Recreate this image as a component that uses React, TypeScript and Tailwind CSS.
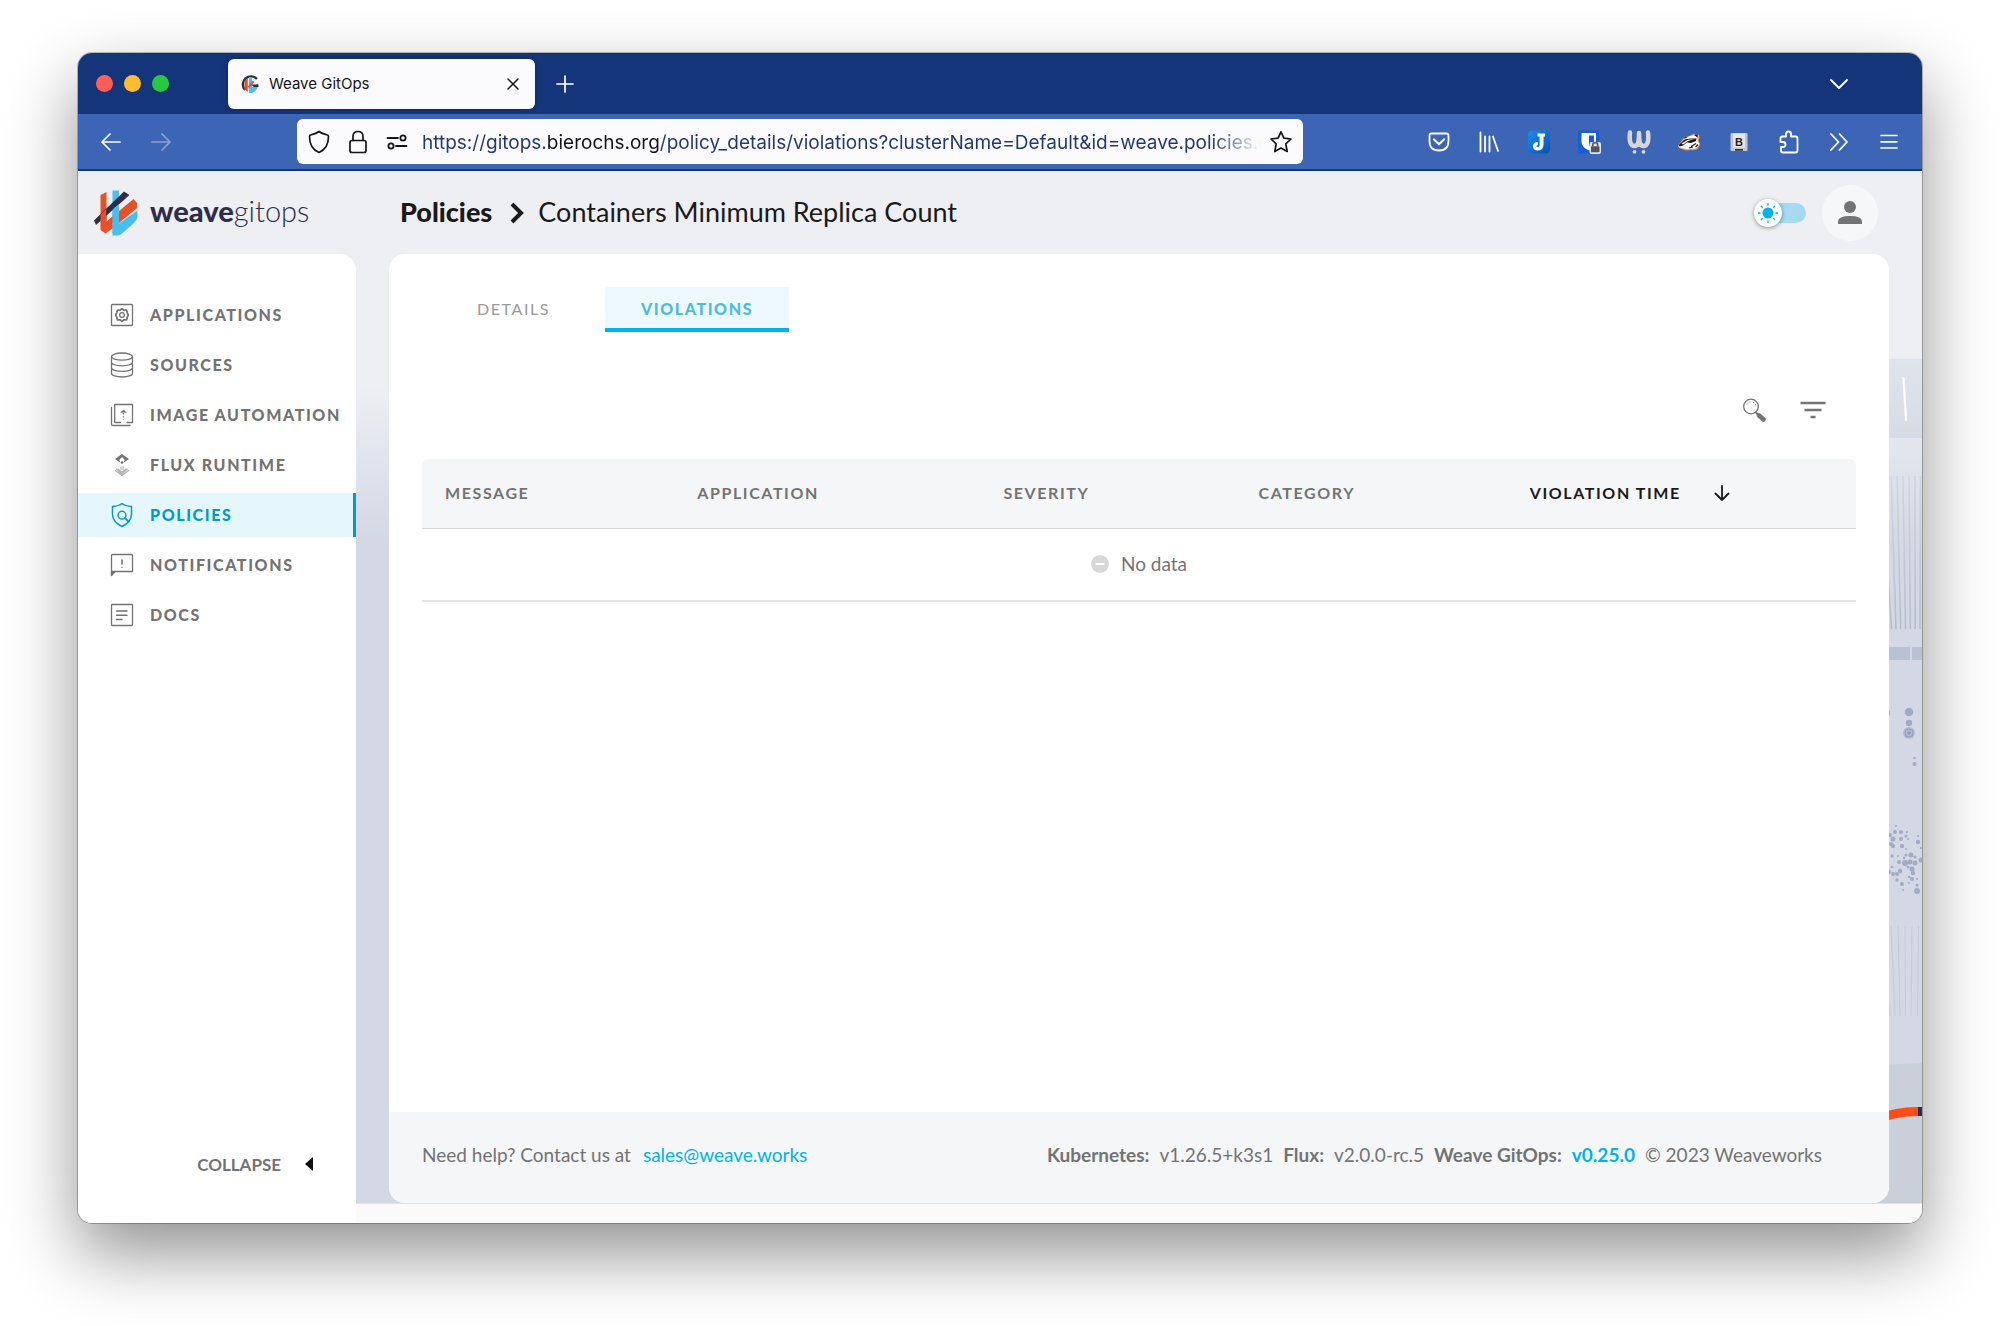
import type { ReactNode } from "react";

const stroke = {
  fill: "none",
  stroke: "currentColor",
  strokeLinecap: "round" as const,
  strokeLinejoin: "round" as const,
};

function WeaveMark({ className }: { className: string }) {
  return (
    <svg className={className} viewBox="0 0 44 46" aria-hidden="true">
      <path d="M6.500 5 12.500 2V31l6 4v3.500L11.500 43.500 6.500 40Z" fill="#eb4f27" />
      <path d="M18.500 0.500h6.500v33L43.500 20.500v6.500Q43 30 40 33L28 43.500Q26 45.500 23.500 45.500H18.500Z" fill="#49bfee" />
      <path d="M0 30.500 30 1.500 35.500 5 2 35Z" fill="#2f2e4a" />
      <path d="M6.500 24.500 12.500 19V31H6.500Z" fill="#eb4f27" />
      <path d="M12.500 37.500V31.500L39.500 9 43 13V18L25 33V27L18.500 33v6Z" fill="#eb4f27" />
      <path d="M18.500 19.500 25 14V43H18.500Z" fill="#49bfee" />
      <path d="M12.500 19 18.500 13.500V19.500L12.500 25Z" fill="#2f2e4a" />
    </svg>
  );
}

function Favicon() {
  return (
    <svg className="size-[18px] shrink-0" viewBox="0 0 18 18" aria-hidden="true">
      <path d="M16 4A8 8 0 1 0 4 15" fill="none" stroke="#2f2e4a" strokeWidth="2.400" />
      <path d="M3.500 5.500 6.800 3.500V17L3.500 14.500Z" fill="#eb4f27" />
      <path d="M8 2h3v10L17 8.500Q17.500 15 11 18H8Z" fill="#49bfee" />
      <path d="M10 9.500h7.500v2.500H13Z" fill="#2f2e4a" />
      <path d="M6.800 11.500 12 5.500 13.500 7 8 13Z" fill="#eb4f27" />
    </svg>
  );
}

type NavItem = { label: string; icon: ReactNode; active?: boolean };

const navItems: NavItem[] = [
  {
    label: "APPLICATIONS",
    icon: (
      <>
        <rect x="1.500" y="1.500" width="21" height="21" rx="0.800" />
        <path d="M12 5.800 14 7.200 16.500 7.100 17.300 9.800 18.300 12 17.300 14.200 16.500 16.900 14 16.800 12 18.200 10 16.800 7.500 16.900 6.700 14.200 5.700 12 6.700 9.800 7.500 7.100 10 7.200Z" strokeWidth="1.800" />
        <circle cx="12" cy="12" r="2.400" />
      </>
    ),
  },
  {
    label: "SOURCES",
    icon: (
      <>
        <ellipse cx="12" cy="3.600" rx="10.500" ry="3.600" />
        <path d="M1.500 3.600V20.400C1.500 22.400 6.200 24 12 24S22.500 22.400 22.500 20.400V3.600M1.500 9.200C1.500 11.200 6.200 12.800 12 12.800S22.500 11.200 22.500 9.200M1.500 14.800C1.500 16.800 6.200 18.400 12 18.400S22.500 16.800 22.500 14.800" />
      </>
    ),
  },
  {
    label: "IMAGE AUTOMATION",
    icon: (
      <>
        <path d="M10.500 19.500H4.700V1.500H22.500V19.500H17M1.500 4.500V21.200Q1.500 22.500 3 22.500H20" />
        <path d="M13.500 10V17" strokeDasharray="1.400 1.800" strokeLinecap="butt" />
        <path d="M11 9.300 13.500 6.800 16 9.300Z" fill="currentColor" strokeWidth="0.500" />
      </>
    ),
  },
  {
    label: "FLUX RUNTIME",
    icon: (
      <>
        <path fill="currentColor" stroke="none" d="M12 1 19 6 14 9.500V7.500H15.200L12 4 8.800 7.500H10V9.500L5 6Z" />
        <path fill="currentColor" stroke="none" d="M10.300 9.800 12 11 13.700 9.800 12.700 9V8H11.300V9Z" />
        <g opacity="0.550" strokeWidth="1.100">
          <path d="M5.500 17.500 12 22.500 18.500 17.500M8 16 12 19.200 16 16M8 19 12 22.200M11 13.500V16.500M13 13.500V16.500M6.500 16.200 12 20.800 17.500 16.200" />
        </g>
      </>
    ),
  },
  {
    label: "POLICIES",
    active: true,
    icon: (
      <>
        <path d="M12 0.500Q15 3 21.500 3.500V11Q21.500 19 12 23.500 2.500 19 2.500 11V3.500Q9 3 12 0.500Z" strokeWidth="1.500" />
        <circle cx="12" cy="12.200" r="3.900" strokeWidth="1.500" />
        <path d="M15 15.200 18.500 18.500" strokeWidth="1.800" />
      </>
    ),
  },
  {
    label: "NOTIFICATIONS",
    icon: (
      <>
        <path d="M1.500 22V2.500Q1.500 1.500 2.500 1.500H21.500Q22.500 1.500 22.500 2.500V18.500H5Z" />
        <path d="M1.500 18.500H5L1.500 22.500Z" fill="currentColor" />
        <path d="M12 6.500V11.500M12 14V14.800" strokeLinecap="butt" strokeWidth="1.600" />
      </>
    ),
  },
  {
    label: "DOCS",
    icon: (
      <>
        <rect x="1.500" y="1.500" width="21" height="21" rx="0.800" />
        <path d="M6.500 8H17M6.500 12.200H17M6.500 16.400H12" strokeWidth="1.500" />
      </>
    ),
  },
];

function Tool({ label, children }: { label: string; children: ReactNode }) {
  return (
    <button type="button" aria-label={label} className="flex h-10 w-[50px] items-center justify-center">
      <svg className="size-6" viewBox="0 0 24 24" aria-hidden="true">
        {children}
      </svg>
    </button>
  );
}

function TabStrip() {
  return (
    <div className="flex h-[61px] items-center bg-[#15357b] pl-[18px] text-white">
      <div className="flex w-[132px] gap-[11px]">
        <button type="button" aria-label="Close window" className="size-[17px] rounded-full bg-[#ff5f57]" />
        <button type="button" aria-label="Minimise window" className="size-[17px] rounded-full bg-[#febc2e]" />
        <button type="button" aria-label="Zoom window" className="size-[17px] rounded-full bg-[#28c840]" />
      </div>
      <div className="flex h-[50px] w-[307px] items-center rounded-md bg-[#fbfbfe] pr-3 pl-[13px] text-[#15141a] shadow-[0_0_4px_rgba(0,0,0,0.4)]">
        <Favicon />
        <span className="ml-[10px] flex-1 pt-[2px] text-[15px]">Weave GitOps</span>
        <button type="button" aria-label="Close tab" className="flex size-5 items-center justify-center">
          <svg className="size-3" viewBox="0 0 12 12" aria-hidden="true" {...stroke} strokeWidth="1.500">
            <path d="M1 1 11 11M11 1 1 11" />
          </svg>
        </button>
      </div>
      <button type="button" aria-label="New tab" className="ml-[18px] flex size-6 items-center justify-center">
        <svg className="size-[18px]" viewBox="0 0 18 18" aria-hidden="true" {...stroke} strokeWidth="1.700">
          <path d="M9 1V17M1 9H17" />
        </svg>
      </button>
      <button type="button" aria-label="List all tabs" className="mr-[71px] ml-auto flex size-6 items-center justify-center">
        <svg className="h-[10px] w-[18px]" viewBox="0 0 18 10" aria-hidden="true" {...stroke} strokeWidth="1.800">
          <path d="M1 1 9 9 17 1" />
        </svg>
      </button>
    </div>
  );
}

function NavigationBar() {
  return (
    <div className="flex h-[57px] items-center border-b-2 border-[#15357b] bg-[#3d65b6] pr-2 text-white">
      <button type="button" aria-label="Back" className="ml-[21px] flex size-6 items-center justify-center">
        <svg className="h-[18px] w-5" viewBox="0 0 20 18" aria-hidden="true" {...stroke} strokeWidth="1.700">
          <path d="M19 9H1M9 1 1 9 9 17" />
        </svg>
      </button>
      <button type="button" aria-label="Forward" disabled className="ml-[26px] flex size-6 items-center justify-center opacity-40">
        <svg className="h-[18px] w-5" viewBox="0 0 20 18" aria-hidden="true" {...stroke} strokeWidth="1.700">
          <path d="M1 9H19M11 1 19 9 11 17" />
        </svg>
      </button>
      <div className="ml-[124px] flex h-[45px] min-w-0 flex-1 items-center rounded-md bg-[#fbfbfe] px-[10px] text-[#15141a]">
        <svg className="size-6 shrink-0" viewBox="0 0 24 24" aria-hidden="true" {...stroke} strokeWidth="1.700">
          <path d="M12 1.500Q14.500 3.500 20.500 5Q21.500 5.300 21.500 6.500Q21.500 18.500 12 22.500Q2.500 18.500 2.500 6.500Q2.500 5.300 3.500 5Q9.500 3.500 12 1.500Z" />
        </svg>
        <svg className="ml-[15px] size-6 shrink-0" viewBox="0 0 24 24" aria-hidden="true" {...stroke} strokeWidth="1.700">
          <rect x="4" y="10.500" width="16" height="12" rx="2" />
          <path d="M7 10.500V6.500Q7 1.500 12 1.500T17 6.500V10.500" />
        </svg>
        <svg className="ml-[15px] size-6 shrink-0" viewBox="0 0 24 24" aria-hidden="true" {...stroke} strokeWidth="1.800">
          <path d="M2.500 8H13M11 16H21.500" />
          <circle cx="18" cy="8" r="2.600" />
          <circle cx="6" cy="16" r="2.600" />
        </svg>
        <input
          type="text"
          aria-label="Address"
          readOnly
          value="https://gitops.bierochs.org/policy_details/violations?clusterName=Default&id=weave.policies.co"
          className="ml-[13px] h-10 min-w-0 flex-1 bg-[linear-gradient(90deg,#20376f_0_125px,#15141a_125px_238px,#20376f_238px)] bg-clip-text pt-[2px] text-[19px] text-transparent outline-none [mask-image:linear-gradient(90deg,black_calc(100%-50px),transparent)]"
        />
        <button type="button" aria-label="Bookmark this page" className="ml-2 flex size-6 shrink-0 items-center justify-center">
          <svg className="size-6" viewBox="0 0 24 24" aria-hidden="true" {...stroke} strokeWidth="1.700">
            <path d="M12 1.800 14.900 8.200 22 9 16.800 13.800 18.200 21.500 12 18 5.800 21.500 7.200 13.800 2 9 9.100 8.200Z" />
          </svg>
        </button>
      </div>
      <div className="ml-[111px] flex">
        <Tool label="Save to Pocket">
          <g {...stroke} strokeWidth="1.800">
            <path d="M4.500 3.500H19.500Q21.500 3.500 21.500 5.500V11Q21.500 20.500 12 20.500T2.500 11V5.500Q2.500 3.500 4.500 3.500Z" />
            <path d="M7 9.500 12 14.200 17 9.500" strokeWidth="2.200" />
          </g>
        </Tool>
        <Tool label="Library">
          <path d="M3.500 2.500V21.500M8 6.500V21.500M12.500 6.500V21.500M16 6.500 21 21" {...stroke} strokeWidth="1.800" />
        </Tool>
        <Tool label="Joplin Web Clipper">
          <defs>
            <linearGradient id="joplin" x1="0" y1="0" x2="1" y2="1">
              <stop offset="0" stopColor="#1c8df0" />
              <stop offset="1" stopColor="#0652b3" />
            </linearGradient>
          </defs>
          <rect x="1" y="0.500" width="22" height="23" rx="4.500" fill="url(#joplin)" />
          <path d="M10.500 3.500H18V6.500H16.500V14.500Q16.500 20.500 10.500 20.500 6 20.200 6 16.200 6 12.200 10.800 12V15.200Q9.500 15.200 9.500 16.300 9.700 17.500 11.300 17.200 12.600 16.900 12.600 14.500V6.500H10.500Z" fill="#fff" />
        </Tool>
        <Tool label="Bitwarden">
          <rect x="1" y="0.500" width="21" height="23" rx="1.500" fill="#175ddc" />
          <path d="M4.500 3H19V12Q19 17 12 20.500 4.500 17 4.500 12Z" fill="#fff" />
          <path d="M12 5.500H17V12Q16.500 14.500 12 16.500Z" fill="#175ddc" />
          <rect x="12.500" y="12" width="11.500" height="12" rx="2" fill="#dfe3ea" />
          <path d="M15.700 16.500V15Q15.700 12.600 18.200 12.600T20.700 15V16.500" fill="none" stroke="#555" strokeWidth="1.500" />
          <rect x="14" y="16.300" width="8.500" height="6" rx="0.800" fill="#555" />
        </Tool>
        <Tool label="Wallabagger">
          <path
            d="M3 2.500C2 11 3.500 16 7.500 16 11 16 12 12.500 12 3M12 3C12 12.500 13 16 16.500 16 20.500 16 22 11 21 2.500"
            fill="none"
            stroke="#d6d6d6"
            strokeLinecap="round"
            strokeWidth="4.500"
          />
          <circle cx="7.500" cy="21.800" r="1.900" fill="#d6d6d6" />
          <circle cx="16.500" cy="21.800" r="1.900" fill="#d6d6d6" />
        </Tool>
        <Tool label="Privacy Badger">
          <path d="M1 15.500 8 6.500 10.500 7 17 3.500 18.500 6 22 4.500 22.500 8 21.500 10.500 23.200 14.500 20 19.500 9 20.500 2 18Z" fill="#f5a24b" />
          <path d="M1.500 15.500 8 8 12 6.500 17.500 5 20.500 7.500 20.500 11 22.500 14 19 18.500 10 19 2.500 17.500Z" fill="#fff" />
          <path d="M1.500 15 7.500 9.500 13 8.500 19.500 8.500 19 11 14 13 10 12.500 6 15.500 2.500 16.500Z" fill="#1d1d1d" />
          <path d="M6.500 8.500 8.500 6.500 10.500 8ZM17 5 20.500 5 20.500 7.500Z" fill="#1d1d1d" />
          <path d="M4.500 13.500 11 9.700 17 9.300 11 11 6 14.500Z" fill="#fff" />
          <path d="M14 16.500 19 13.500M12 18 16 17M18.500 17 21 14.500" stroke="#1d1d1d" strokeWidth="1.200" />
        </Tool>
        <Tool label="Bypass extension">
          <rect x="3.500" y="3" width="17" height="18" rx="1" fill="#c3c6ca" />
          <rect x="6" y="3.500" width="12" height="14" fill="#e3e5e8" />
          <text x="12" y="15.500" textAnchor="middle" fontFamily="Liberation Sans" fontSize="11" fontWeight="700" fill="#222">
            B
          </text>
          <rect x="8" y="19" width="8" height="1.700" fill="#333" />
        </Tool>
        <Tool label="Extensions">
          <path
            d="M9 6.500V4Q9 1.500 11.500 1.500T14 4V6.500H18.500Q20.500 6.500 20.500 8.500V20.500Q20.500 22.500 18.500 22.500H6Q4 22.500 4 20.500V17H6Q8.500 17 8.500 14.500T6 12H3.500V8.500Q3.500 6.500 5.500 6.500Z"
            {...stroke}
            strokeWidth="1.800"
          />
        </Tool>
        <Tool label="More tools">
          <path d="M4 4 11.500 12 4 20M12.500 4 20 12 12.500 20" {...stroke} strokeWidth="1.800" />
        </Tool>
        <Tool label="Open application menu">
          <path d="M4 5.500H20M4 11.800H20M4 18H20" {...stroke} strokeWidth="1.700" />
        </Tool>
      </div>
    </div>
  );
}

const dots: [number, number, number][] = [
  [24, 655, 1], [23, 661, 2], [29, 661, 2], [35, 661, 1], [18, 664, 2], [21, 668, 2.500], [29, 668, 2], [34, 665, 1.500], [36, 668, 1],
  [46, 665, 1], [46, 671, 2.200], [19, 673, 2], [21, 675, 2], [30, 675, 2.200], [34, 678, 1], [49, 677, 1], [20, 685, 1.700], [26, 685, 1],
  [34, 684, 1.500], [39, 684, 2.500], [43, 686, 1.500], [32, 687, 1.200], [27, 691, 2], [33, 692, 3], [38, 691, 2.500], [43, 692, 2.500], [49, 689, 2.500],
  [20, 696, 1.300], [36, 696, 1.500], [40, 698, 2.500], [41, 702, 2.200], [17, 701, 2], [21, 703, 2], [25, 703, 2], [28, 700, 2.200],
  [37, 706, 1.300], [25, 709, 1.700], [40, 708, 2], [45, 708, 1], [30, 713, 2], [37, 712, 1], [45, 714, 1.500], [31, 719, 1], [45, 720, 3],
];

function Backdrop() {
  return (
    <svg className="absolute top-0 right-0 h-[1032px] w-[50px]" viewBox="0 0 50 1032" aria-hidden="true">
      <defs>
        <linearGradient id="panel" x1="0" y1="0" x2="0" y2="1">
          <stop offset="0" stopColor="#dfe5ec" />
          <stop offset="1" stopColor="#d6dbe5" />
        </linearGradient>
        <linearGradient id="haze" x1="0" y1="0" x2="0" y2="1">
          <stop offset="0" stopColor="#e3e7ed" />
          <stop offset="1" stopColor="#d4d8e4" />
        </linearGradient>
        <linearGradient id="rods" gradientUnits="userSpaceOnUse" x1="0" y1="305" x2="0" y2="458">
          <stop offset="0" stopColor="#cfd5df" />
          <stop offset="1" stopColor="#b3bcca" />
        </linearGradient>
      </defs>
      <rect x="0" y="188" width="50" height="79" fill="url(#panel)" />
      <rect x="0" y="267" width="50" height="110" fill="url(#haze)" />
      <path d="M31.500 207 34 249" stroke="#fdfdfe" strokeWidth="2.200" strokeLinecap="round" />
      <path
        d="M16 400 19.500 458M19 305 24 458M25 305 28.700 458M31 305 33.500 458M37 305 38.300 458M43 305 43.200 458M48.500 305 48 458"
        fill="none"
        stroke="url(#rods)"
        strokeWidth="1.500"
      />
      <path d="M0 476H38V489H0ZM40 476H50V489H40Z" fill="#b7c2d5" />
      <g fill="#a0abc4">
        <path d="M14 538Q18 538 18 542T14 546Z" />
        <circle cx="37" cy="541" r="4.300" />
        <circle cx="37" cy="552" r="3.200" />
        <circle cx="37" cy="562" r="6" opacity="0.650" />
        <circle cx="37" cy="562" r="4" fill="none" stroke="#8f9bb7" />
        <circle cx="37" cy="562" r="1.800" fill="#8f9bb7" />
        <circle cx="42.500" cy="587" r="1.200" />
        <circle cx="42.500" cy="593" r="2" />
        {dots.map(([cx, cy, r], i) => (
          <circle key={i} cx={cx} cy={cy} r={r} />
        ))}
      </g>
      <path d="M12 780 18 845M19 755 23 845M26 755 28 845M33 755 33.500 845M40 755 39 845M46.500 755 45.500 845" fill="none" stroke="#c3cad6" strokeWidth="1" />
      <path d="M0 898Q20 892 50 892V1032H0Z" fill="#cad0da" />
      <path d="M0 950Q22 940.500 46 940.500" fill="none" stroke="#ff4b16" strokeWidth="9" />
      <path d="M46 936H50V945H46Z" fill="#2f2e4a" />
    </svg>
  );
}

function Header() {
  return (
    <header className="relative flex h-[83px] items-center pr-11">
      <a href="#home" aria-label="weave gitops home" className="flex w-[307px] items-center pl-4">
        <WeaveMark className="h-[46px] w-[44px]" />
        <span className="ml-3 pb-1 text-[29px] text-[#2f2e4a]">
          <b className="font-black">weave</b>
          <span className="font-light">gitops</span>
        </span>
      </a>
      <nav aria-label="Breadcrumb" className="flex flex-1 items-center pl-[15px] text-[27px] text-[#1a1a1a]">
        <a href="#policies" className="font-black">
          Policies
        </a>
        <svg className="mr-[14px] ml-[18px] h-[22px] w-[14px]" viewBox="0 0 14 22" aria-hidden="true">
          <path d="M2 2 11 11 2 20" fill="none" stroke="#1a1a1a" strokeWidth="4" />
        </svg>
        <h1>Containers Minimum Replica Count</h1>
      </nav>
      <label className="relative flex h-7 w-[52px] items-center">
        <input type="checkbox" aria-label="Dark mode" className="ml-auto h-5 w-10 appearance-none rounded-full bg-[#a6d9f2]" />
        <span className="absolute left-0 flex size-7 items-center justify-center rounded-full bg-white shadow-[0_1px_4px_rgba(0,0,0,0.4)]">
          <svg className="size-5" viewBox="0 0 20 20" aria-hidden="true">
            <circle cx="10" cy="10" r="5.500" fill="#00b3ec" />
            <path
              d="M10 0V2.500M10 17.500V20M0 10H2.500M17.500 10H20M3 3 4.700 4.700M15.300 15.300 17 17M3 17 4.700 15.300M15.300 4.700 17 3"
              stroke="#00b3ec"
              strokeWidth="1.300"
            />
          </svg>
        </span>
      </label>
      <button type="button" aria-label="Account" className="ml-4 flex size-14 items-center justify-center rounded-full bg-[#f6f7f9]">
        <svg className="size-6" viewBox="0 0 24 24" aria-hidden="true" fill="#737373">
          <circle cx="12" cy="6" r="6" />
          <path d="M0 23V20.500Q0 15 12 15T24 20.500V23Z" />
        </svg>
      </button>
    </header>
  );
}

function Sidebar() {
  return (
    <aside className="flex w-[278px] shrink-0 flex-col rounded-tr-2xl bg-white pt-[39px] text-[#737373]">
      <nav aria-label="Main" className="flex flex-col gap-[6px]">
        {navItems.map((item) => (
          <a
            key={item.label}
            href={"#" + item.label.toLowerCase().replace(" ", "-")}
            aria-current={item.active ? "page" : undefined}
            className={
              "flex h-11 items-center gap-4 border-r-[3px] pl-8 text-base font-black tracking-widest whitespace-nowrap " +
              (item.active ? "border-[#009ccc] bg-[#e5f7fd] text-[#009ccc]" : "border-transparent")
            }
          >
            <svg className="size-6 shrink-0 overflow-visible" viewBox="0 0 24 24" aria-hidden="true" {...stroke} strokeWidth="1.300">
              {item.icon}
            </svg>
            {item.label}
          </a>
        ))}
      </nav>
      <button type="button" className="mt-auto mr-[43px] mb-[46px] flex items-center gap-6 self-end text-[17px] font-bold">
        COLLAPSE
        <svg className="h-[14px] w-2" viewBox="0 0 8 14" aria-hidden="true">
          <path d="M8 0V14L0 7Z" fill="#111" />
        </svg>
      </button>
    </aside>
  );
}

function ViolationsTable() {
  const cell = "pl-[23px] text-left font-bold";
  return (
    <table className="w-full table-fixed text-base text-[#737373]">
      <colgroup>
        <col className="w-[252px]" />
        <col className="w-[306px]" />
        <col className="w-[255px]" />
        <col className="w-[271px]" />
        <col className="w-[349px]" />
      </colgroup>
      <thead>
        <tr className="h-[69px] border-b border-[#d8d8d8] bg-[#f5f6f8] tracking-widest">
          <th className={cell + " rounded-tl-md"}>MESSAGE</th>
          <th className={cell}>APPLICATION</th>
          <th className={cell}>SEVERITY</th>
          <th className={cell}>CATEGORY</th>
          <th className={cell + " rounded-tr-md text-[#1a1a1a]"} aria-sort="descending">
            <button type="button" className="flex items-center gap-8 tracking-widest">
              VIOLATION TIME
              <svg className="h-4 w-[18px]" viewBox="0 0 18 16" aria-hidden="true" {...stroke} strokeWidth="1.800">
                <path d="M9 1V15M2.500 8.500 9 15 15.500 8.500" />
              </svg>
            </button>
          </th>
        </tr>
      </thead>
      <tbody>
        <tr className="h-[73px] border-b-2 border-[#e3e3e3] text-[19px]">
          <td colSpan={5}>
            <div className="flex items-center justify-center gap-3">
              <svg className="size-[18px]" viewBox="0 0 18 18" aria-hidden="true">
                <circle cx="9" cy="9" r="9" fill="#d8d8d8" />
                <path d="M4.500 9H13.500" stroke="#fff" strokeWidth="2" />
              </svg>
              No data
            </div>
          </td>
        </tr>
      </tbody>
    </table>
  );
}

function MainPanel() {
  return (
    <main className="relative mr-[33px] ml-[33px] flex flex-1 flex-col overflow-hidden rounded-2xl bg-white">
      <div className="flex flex-1 flex-col px-[33px]">
        <div role="tablist" className="mt-[33px] flex h-[45px] text-base">
          <button type="button" role="tab" aria-selected="false" className="w-[183px] border-b-4 border-transparent pt-[3px] text-base tracking-widest text-[#9a9a9a]">
            DETAILS
          </button>
          <button type="button" role="tab" aria-selected="true" className="w-[184px] border-b-4 border-[#00b3ec] bg-[#edf9fe] pt-[3px] text-base font-black tracking-widest text-[#4dbbdf]">
            VIOLATIONS
          </button>
        </div>
        <div className="mt-[66px] mb-[37px] flex justify-end gap-8 pr-[30px] text-[#737373]">
          <button type="button" aria-label="Search">
            <svg className="h-6 w-[26px]" viewBox="0 0 26 24" aria-hidden="true">
              <circle cx="9" cy="8.500" r="7.300" fill="none" stroke="currentColor" strokeWidth="1.300" />
              <path d="M5 6.500 6 5.500M8 4.500V3.500M11 5 12 4M13 7 14 6.500" stroke="currentColor" strokeWidth="1" />
              <path d="M13.800 14.300 16 16.500" stroke="currentColor" strokeWidth="2" />
              <path d="M17 17.500 21.500 21.500" stroke="currentColor" strokeWidth="4.500" strokeLinecap="round" />
            </svg>
          </button>
          <button type="button" aria-label="Filter">
            <svg className="h-6 w-[26px]" viewBox="0 0 26 24" aria-hidden="true">
              <path d="M0.500 5H25.500M4.500 12H21.500M10.500 19H15.500" stroke="currentColor" strokeWidth="2.700" />
            </svg>
          </button>
        </div>
        <ViolationsTable />
      </div>
      <footer className="flex h-[91px] items-center justify-between bg-[#f5f6f8] pr-[67px] pb-1 pl-[33px] text-[19px] whitespace-nowrap text-[#737373]">
        <p>
          Need help? Contact us at
          <a href="mailto:sales@weave.works" className="ml-3 text-[#00b3ec]">
            sales@weave.works
          </a>
        </p>
        <p className="flex gap-[10px]">
          <b>Kubernetes:</b>
          <span>v1.26.5+k3s1</span>
          <b>Flux:</b>
          <span>v2.0.0-rc.5</span>
          <b>Weave GitOps:</b>
          <a href="#release" className="font-bold text-[#00b3ec]">
            v0.25.0
          </a>
          <span>© 2023 Weaveworks</span>
        </p>
      </footer>
    </main>
  );
}

export default function App() {
  return (
    <div className="flex min-h-screen bg-white px-[78px] pt-[53px] pb-[103px] font-['Inter',sans-serif]">
      <div className="flex min-w-0 flex-1 flex-col overflow-hidden rounded-[14px] bg-white shadow-[0_0_0_1px_rgba(0,0,0,0.25),0_30px_70px_rgba(0,0,0,0.44)]">
        <TabStrip />
        <NavigationBar />
        <div className="relative flex flex-1 flex-col bg-[linear-gradient(180deg,#eeeff3_0,#eeeff3_215px,#d4d8e4_370px,#d4d8e4_100%)] font-['Lato',sans-serif]">
          <Backdrop />
          <Header />
          <div className="relative flex flex-1">
            <Sidebar />
            <div className="flex min-w-0 flex-1 flex-col">
              <MainPanel />
              <div className="h-5 border-t border-[#e2e2e4] bg-[#fafafa]" />
            </div>
          </div>
        </div>
      </div>
    </div>
  );
}
